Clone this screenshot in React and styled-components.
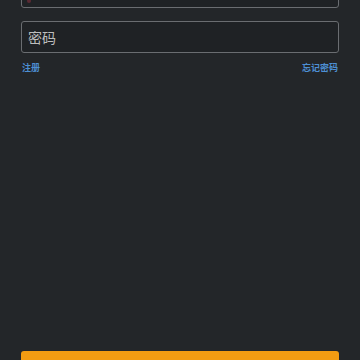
import styled, { createGlobalStyle } from "styled-components"

const Global = createGlobalStyle`
    html, body {
        margin: 0;
        padding: 0;
        background: #232629;
        font-family: "Noto Sans CJK SC", "Noto Sans", sans-serif;
        overflow: hidden;
    }
`;

const Page = styled.div`
    padding: 0 21px;
    margin-top: -24px;
    display: flex;
    flex-direction: column;
`;

const Field = styled.div`
    position: relative;
    height: 32px;
    box-sizing: border-box;
    border: 1px solid #6a6d71;
    border-radius: 3px;
    background: #1f2225;
    margin-bottom: ${(p) => p.gap || 0}px;
`;

const Input = styled.input`
    width: 100%;
    height: 100%;
    box-sizing: border-box;
    border: none;
    outline: none;
    background: transparent;
    padding: 0 6px;
    font-family: "Noto Sans CJK SC", sans-serif;
    font-size: 14px;
    color: #c4c4c4;

    &::placeholder {
        color: #bdbdbd;
    }
`;

const Mark = styled.span`
    position: absolute;
    left: 5px;
    bottom: 4px;
    width: 4px;
    height: 4px;
    border-radius: 50%;
    background: #5a2a33;
`;

const Links = styled.div`
    display: flex;
    justify-content: space-between;
    margin-top: 9px;
    padding: 0 1px;
`;

const Link = styled.a`
    font-size: 9px;
    line-height: 12px;
    font-weight: bold;
    color: #4d8fd3;
    cursor: pointer;
`;

const Submit = styled.button`
    margin-top: 277px;
    height: 40px;
    border: none;
    border-radius: 3px;
    background: #f39c12;
    color: #fff;
    font-family: "Noto Sans CJK SC", sans-serif;
    font-size: 15px;
`;

const App = () => {
    return (
        <>
            <Global />
            <Page>
                <Field gap={13}>
                    <Input type="text" />
                    <Mark />
                </Field>
                <Field>
                    <Input type="password" placeholder="密码" />
                </Field>
                <Links>
                    <Link>注册</Link>
                    <Link>忘记密码</Link>
                </Links>
                <Submit>登录</Submit>
            </Page>
        </>
    )
};

export default App
